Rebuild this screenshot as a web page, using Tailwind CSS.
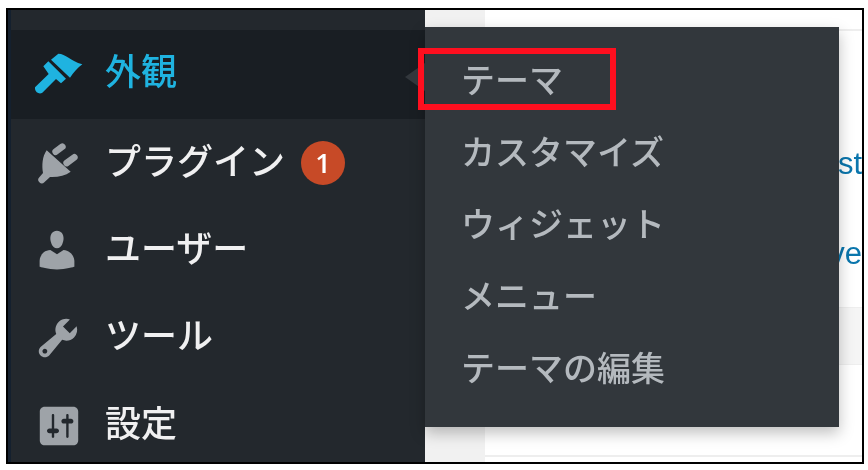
<!DOCTYPE html>
<html lang="ja">
<head>
<meta charset="utf-8">
<script src="https://cdn.jsdelivr.net/npm/@tailwindcss/browser@4"></script>
</head>
<body class="bg-white w-[868px] h-[470px] overflow-hidden font-['Noto_Sans_CJK_JP','Noto_Sans',sans-serif]">
<div class="relative ml-[6px] mt-[8px] w-[858px] h-[456px] border-2 border-black overflow-hidden">
  <div class="flex h-full blur-[0.5px]">
    <!-- Sidebar -->
    <nav class="w-[417px] h-full shrink-0 bg-[#23282d] border-l-[3px] border-[#14202e] pt-[20px]">
      <a class="flex items-center h-[89px] pl-[24px] gap-[22px] bg-[#191e23] text-[#1fb3e0] text-[36px] font-medium leading-none">
        <svg viewBox="30 16 144 144" class="w-[48px] h-[48px] fill-[#1fb3e0] shrink-0"><path d="M78 42 L100 24 C122 24 136 46 172 56 C158 66 146 80 135 96 Z"/><path d="M70 47 L123 99 L108 113 L93 100 L52 141 C42 148 28 138 30 125 L71 85 L55 62 Z"/></svg>
        <span class="pb-[11px]">外観</span>
      </a>
      <a class="flex items-center h-[87px] pl-[24px] gap-[22px] text-[#f0f0f1] text-[36px] font-medium leading-none">
        <svg viewBox="30 10 144 144" class="w-[48px] h-[48px] fill-[#9ea3a8] shrink-0"><path d="M65 44 L137 108 C120 120 100 125 75 124 L58 140 A10 10 0 0 1 43 125 L54 112 C50 90 52 62 65 44 Z"/><path d="M92 48 L112 33 M125 82 L148 65" stroke="#9ea3a8" stroke-width="20" stroke-linecap="round"/></svg>
        <span class="pb-[8px]">プラグイン</span>
        <span class="flex items-center justify-center w-[44px] h-[44px] -ml-[6px] rounded-full bg-[#c74a27] text-white text-[27px] font-semibold font-['Open_Sans',sans-serif]">1</span>
      </a>
      <a class="flex items-center h-[87px] pl-[24px] gap-[22px] text-[#f0f0f1] text-[36px] font-medium leading-none">
        <svg viewBox="0 0 20 20" class="w-[48px] h-[48px] fill-[#9ea3a8] shrink-0 -translate-x-[2px]"><path d="M10 9.25c-2.27 0-2.73-3.44-2.73-3.44C7 4.02 7.82 2 9.97 2c2.16 0 2.98 2.02 2.71 3.81 0 0-.41 3.44-2.68 3.44zm0 2.57L12.72 10c2.39 0 4.52 2.33 4.52 4.53v2.49s-3.65 1.13-7.24 1.13c-3.65 0-7.24-1.13-7.24-1.13v-2.49c0-2.25 1.94-4.48 4.47-4.48z"/></svg>
        <span class="pb-[7px]">ユーザー</span>
      </a>
      <a class="flex items-center h-[87px] pl-[24px] gap-[22px] text-[#f0f0f1] text-[36px] font-medium leading-none">
        <svg viewBox="0 0 20 20" class="w-[48px] h-[48px] fill-[#9ea3a8] shrink-0 -translate-x-[1px] translate-y-[1px]"><path d="M16.68 9.77c-1.34 1.34-3.3 1.67-4.95.99l-5.41 6.52c-.99.99-2.59.99-3.58 0s-.99-2.59 0-3.57l6.52-5.42c-.68-1.65-.35-3.61.99-4.95 1.28-1.28 3.12-1.62 4.72-1.06l-2.89 2.89 2.82 2.82 2.86-2.87c.53 1.58.18 3.39-1.08 4.65zM3.81 16.21c.4.39 1.04.39 1.43 0 .4-.4.4-1.04 0-1.43-.39-.4-1.03-.4-1.43 0-.39.39-.39 1.03 0 1.43z"/></svg>
        <span class="pb-[8px]">ツール</span>
      </a>
      <a class="flex items-center h-[87px] pl-[24px] gap-[22px] text-[#f0f0f1] text-[36px] font-medium leading-none">
        <svg viewBox="0 0 20 20" class="w-[48px] h-[48px] fill-[#9ea3a8] shrink-0 translate-y-[2px]"><path d="M18 16V4c0-1.1-.9-2-2-2H4c-1.1 0-2 .9-2 2v12c0 1.1.9 2 2 2h12c1.1 0 2-.9 2-2zM8 11h1c.55 0 1 .45 1 1s-.45 1-1 1H8v1.5c0 .28-.22.5-.5.5s-.5-.22-.5-.5V13H6c-.55 0-1-.45-1-1s.45-1 1-1h1V5.5c0-.28.22-.5.5-.5s.5.22.5.5V11zm5-2h-1c-.55 0-1-.45-1-1s.45-1 1-1h1V5.5c0-.28.22-.5.5-.5s.5.22.5.5V7h1c.55 0 1 .45 1 1s-.45 1-1 1h-1v5.5c0 .28-.22.5-.5.5s-.5-.22-.5-.5V9z"/></svg>
        <span class="pb-[5px]">設定</span>
      </a>
    </nav>
    <!-- Main column -->
    <div class="w-[60px] h-full shrink-0 bg-[#f1f1f1]"></div>
    <main class="flex-1 h-full bg-white flex flex-col font-['Liberation_Sans',sans-serif] text-[#0a76ad] text-[31px] leading-[30px] overflow-hidden">
      <div class="h-[19px] shrink-0"></div>
      <div class="h-[2px] shrink-0 bg-[#eeeeee]"></div>
      <div class="h-[118px] shrink-0"></div>
      <div class="flex justify-end h-[30px] shrink-0">st</div>
      <div class="h-[60px] shrink-0"></div>
      <div class="flex justify-end h-[30px] shrink-0">ve</div>
      <div class="h-[38px] shrink-0"></div>
      <div class="h-[58px] shrink-0 bg-[#f5f5f5] border-y border-[#eeeeee]"></div>
      <div class="h-[90px] shrink-0"></div>
      <div class="h-[2px] shrink-0 bg-[#eeeeee]"></div>
    </main>
  </div>
  <!-- Flyout submenu -->
  <div class="absolute left-[417px] top-[17px] w-[414px] h-[400px] bg-[#32373c] shadow-[0_6px_14px_rgba(0,0,0,0.25)] pt-[16px] pl-[36px] text-[34px] font-medium leading-none blur-[0.4px]">
    <div class="flex items-center h-[72px] text-[#b4b9be]">テーマ</div>
    <div class="flex items-center h-[72px] text-[#b4b9be]">カスタマイズ</div>
    <div class="flex items-center h-[72px] text-[#b4b9be]">ウィジェット</div>
    <div class="flex items-center h-[72px] text-[#b4b9be]">メニュー</div>
    <div class="flex items-center h-[72px] text-[#b4b9be]">テーマの編集</div>
  </div>
  <!-- Pointer arrow -->
  <div class="absolute left-[397px] top-[53px] w-0 h-0 border-y-[14px] border-y-transparent border-r-[20px] border-r-[#32373c]"></div>
  <!-- Annotation rectangle -->
  <div class="absolute left-[410px] top-[38px] w-[198px] h-[62px] border-[6px] border-[#ff0f1f]"></div>
</div>
</body>
</html>
